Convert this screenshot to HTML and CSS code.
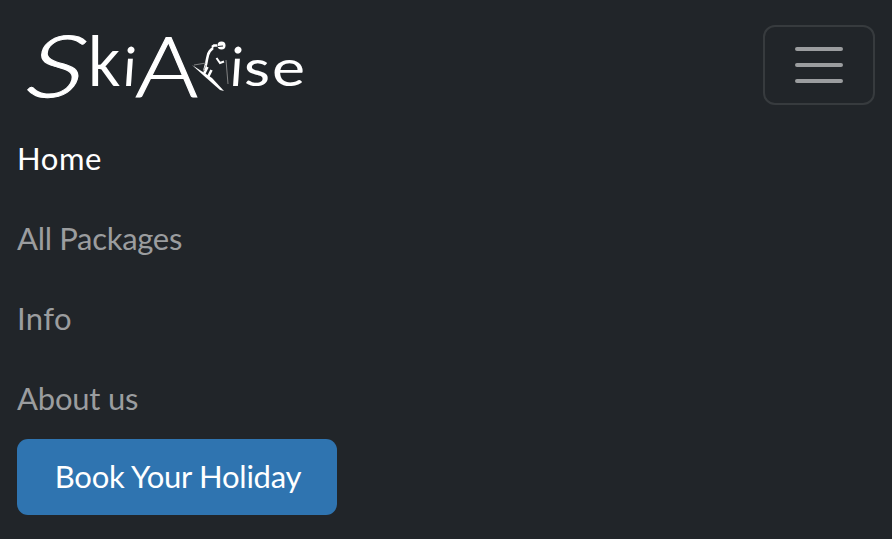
FILE: index.html
```
<!DOCTYPE html>
<html lang="en">
<head>
<meta charset="utf-8">
<title>SkiArise</title>
<link rel="stylesheet" href="styles.css">
</head>
<body>
<nav class="navbar">
  <div class="bar">
    <a class="brand" aria-label="SkiArise">
      <svg class="logo" viewBox="17 20 296 90">
        <g class="letters">
          <text class="thin" transform="translate(21 97) skewX(-16)" font-size="86" textLength="57" lengthAdjust="spacingAndGlyphs">S</text>
          <text x="88" y="86" font-size="70" textLength="32" lengthAdjust="spacingAndGlyphs">k</text>
          <text transform="translate(122 86) skewX(-4)" font-size="54" textLength="13" lengthAdjust="spacingAndGlyphs">i</text>
          <text class="thin" transform="translate(135 97) skewX(-2)" font-size="84" textLength="63" lengthAdjust="spacingAndGlyphs">A</text>
          <text transform="translate(229 86) skewX(-4)" font-size="54" textLength="13" lengthAdjust="spacingAndGlyphs">i</text>
          <text x="244" y="86" font-size="50" textLength="26" lengthAdjust="spacingAndGlyphs">s</text>
          <text x="272" y="86" font-size="50" textLength="33" lengthAdjust="spacingAndGlyphs">e</text>
        </g>
        <g class="skier">
          <circle cx="221.500" cy="45.500" r="4"/>
          <path class="visor" d="M218 46.500l5-.5"/>
          <path class="body" d="M217 45.500h-3l-2 1.500M213 48q-4 3-5 7t-1.500 7-2 8"/>
          <path class="leg" d="M204 74l3.500-7M208 77l3.500-7"/>
          <path class="arm" d="M216.500 58l3.500 5 4-1.500"/>
          <path d="M192 65l14 9 6 4 12 13-4-1-17-15z"/>
          <path class="pole" d="M194 65l12-2M203 72l3-7M226 60l2 24"/>
        </g>
      </svg>
    </a>
    <button class="toggler" aria-label="Toggle navigation">
      <svg class="bars" viewBox="0 0 30 30"><path d="M4 7h22M4 15h22M4 23h22"/></svg>
    </button>
  </div>
  <ul class="menu">
    <li><a class="active">Home</a></li>
    <li><a class="packages">All Packages</a></li>
    <li><a class="info">Info</a></li>
    <li><a class="about">About us</a></li>
  </ul>
  <button class="book">Book Your Holiday</button>
</nav>
</body>
</html>
```
FILE: styles.css
```
* { box-sizing: border-box; }
body {
  margin: 0;
  background: #212529;
  font-family: Lato, "Open Sans", sans-serif;
  font-size: 31px;
}
.navbar {
  height: 539px;
  padding: 20px 17px 0;
  display: flex;
  flex-direction: column;
  align-items: flex-start;
}
.bar {
  width: 100%;
  height: 98px;
  display: flex;
  align-items: flex-start;
  justify-content: space-between;
}
.logo { display: block; width: 296px; height: 90px; fill: #fff; overflow: visible; }
.letters { font-family: Lato, sans-serif; }
.thin { font-weight: 300; stroke: #fff; stroke-width: 1; }
.visor { fill: none; stroke: #212529; stroke-width: 1.2; }
.body { fill: none; stroke: #fff; stroke-width: 2.6; }
.leg { fill: none; stroke: #fff; stroke-width: 2.6; }
.arm { fill: none; stroke: #fff; stroke-width: 2; }
.pole { fill: none; stroke: #999; stroke-width: 0.8; }
.toggler {
  width: 112px;
  height: 80px;
  margin-top: 5px;
  padding: 0;
  display: flex;
  align-items: center;
  justify-content: center;
  background: none;
  border: 2px solid #373b3e;
  border-radius: 12px;
}
.bars {
  width: 60px;
  height: 60px;
  fill: none;
  stroke: #9b9d9f;
  stroke-width: 2;
  stroke-linecap: round;
}
.menu { list-style: none; margin: 0; padding: 0; }
.menu li { height: 80px; line-height: 80px; color: #9b9d9f; white-space: nowrap; }
.menu .active { color: #fff; letter-spacing: 0.6px; }
.packages { letter-spacing: -0.3px; }
.info { letter-spacing: 0.4px; }
.about { letter-spacing: -0.2px; }
.book {
  width: 320px;
  height: 76px;
  margin-top: 1px;
  padding: 0 0 2px 2px;
  border: 0;
  border-radius: 11px;
  background: #2f74b0;
  color: #fff;
  font: inherit;
  letter-spacing: -0.25px;
  white-space: nowrap;
}
```
